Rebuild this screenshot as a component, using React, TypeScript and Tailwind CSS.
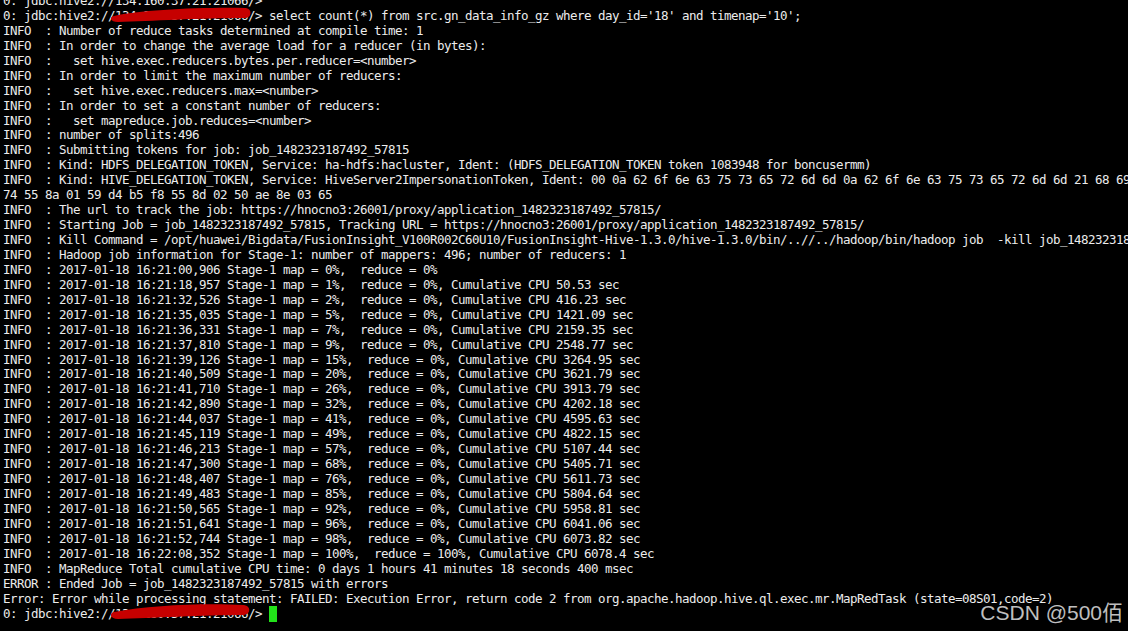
import React from "react";

const prompt = "0: jdbc:hive2://134.160.37.21:21066/>";

const stages: [string, string, string, string][] = [
  ["16:21:00,906", "0%", "0%", ""],
  ["16:21:18,957", "1%", "0%", "50.53"],
  ["16:21:32,526", "2%", "0%", "416.23"],
  ["16:21:35,035", "5%", "0%", "1421.09"],
  ["16:21:36,331", "7%", "0%", "2159.35"],
  ["16:21:37,810", "9%", "0%", "2548.77"],
  ["16:21:39,126", "15%", "0%", "3264.95"],
  ["16:21:40,509", "20%", "0%", "3621.79"],
  ["16:21:41,710", "26%", "0%", "3913.79"],
  ["16:21:42,890", "32%", "0%", "4202.18"],
  ["16:21:44,037", "41%", "0%", "4595.63"],
  ["16:21:45,119", "49%", "0%", "4822.15"],
  ["16:21:46,213", "57%", "0%", "5107.44"],
  ["16:21:47,300", "68%", "0%", "5405.71"],
  ["16:21:48,407", "76%", "0%", "5611.73"],
  ["16:21:49,483", "85%", "0%", "5804.64"],
  ["16:21:50,565", "92%", "0%", "5958.81"],
  ["16:21:51,641", "96%", "0%", "6041.06"],
  ["16:21:52,744", "98%", "0%", "6073.82"],
  ["16:22:08,352", "100%", "100%", "6078.4"],
];

const lines: string[] = [
  prompt,
  prompt + " select count(*) from src.gn_data_info_gz where day_id='18' and timenap='10';",
  "INFO  : Number of reduce tasks determined at compile time: 1",
  "INFO  : In order to change the average load for a reducer (in bytes):",
  "INFO  :   set hive.exec.reducers.bytes.per.reducer=<number>",
  "INFO  : In order to limit the maximum number of reducers:",
  "INFO  :   set hive.exec.reducers.max=<number>",
  "INFO  : In order to set a constant number of reducers:",
  "INFO  :   set mapreduce.job.reduces=<number>",
  "INFO  : number of splits:496",
  "INFO  : Submitting tokens for job: job_1482323187492_57815",
  "INFO  : Kind: HDFS_DELEGATION_TOKEN, Service: ha-hdfs:hacluster, Ident: (HDFS_DELEGATION_TOKEN token 1083948 for boncusermm)",
  "INFO  : Kind: HIVE_DELEGATION_TOKEN, Service: HiveServer2ImpersonationToken, Ident: 00 0a 62 6f 6e 63 75 73 65 72 6d 6d 0a 62 6f 6e 63 75 73 65 72 6d 6d 21 68 69",
  "74 55 8a 01 59 d4 b5 f8 55 8d 02 50 ae 8e 03 65",
  "INFO  : The url to track the job: https://hnocno3:26001/proxy/application_1482323187492_57815/",
  "INFO  : Starting Job = job_1482323187492_57815, Tracking URL = https://hnocno3:26001/proxy/application_1482323187492_57815/",
  "INFO  : Kill Command = /opt/huawei/Bigdata/FusionInsight_V100R002C60U10/FusionInsight-Hive-1.3.0/hive-1.3.0/bin/..//../hadoop/bin/hadoop job  -kill job_1482323187492_57815",
  "INFO  : Hadoop job information for Stage-1: number of mappers: 496; number of reducers: 1",
  ...stages.map(
    ([t, m, r, cpu]) =>
      `INFO  : 2017-01-18 ${t} Stage-1 map = ${m},  reduce = ${r}` + (cpu ? `, Cumulative CPU ${cpu} sec` : "")
  ),
  "INFO  : MapReduce Total cumulative CPU time: 0 days 1 hours 41 minutes 18 seconds 400 msec",
  "ERROR : Ended Job = job_1482323187492_57815 with errors",
  "Error: Error while processing statement: FAILED: Execution Error, return code 2 from org.apache.hadoop.hive.ql.exec.mr.MapRedTask (state=08S01,code=2)",
];

export default function App() {
  return (
    <div className="relative w-[1128px] h-[631px] overflow-hidden bg-black text-[#ececec]">
      <div className="-mt-[6px] pl-[3px] font-['DejaVu_Sans_Mono',monospace] text-[12.5px] tracking-[-0.525px] leading-[14.95px]">
        {lines.map((l, i) => (
          <div key={i} className="h-[14.95px] overflow-hidden whitespace-pre">
            {l}
          </div>
        ))}
        <div className="h-[14.95px] whitespace-pre">
          {prompt + " "}
          <span className="inline-block h-[16px] w-[8px] bg-[#22e21a] align-[-4px]" />
        </div>
      </div>

      {/* redaction marks */}
      <svg className="pointer-events-none absolute left-0 top-0" width="1128" height="631" viewBox="0 0 1128 631">
        <path
          d="M114 16 C140 10, 200 7, 246 8 C252 9, 252 17, 246 18 C200 18, 150 21, 118 22 C110 22, 109 17, 114 16 Z"
          fill="#c60000"
        />
        <path
          d="M114 612 C150 605, 205 603, 244 605 C251 606, 251 614, 244 615 C205 615, 150 618, 118 619 C110 619, 109 613, 114 612 Z"
          fill="#c60000"
        />
      </svg>

      {/* watermark */}
      <div className="absolute right-[5px] bottom-[8px] font-['Liberation_Sans','Noto_Sans_CJK_SC',sans-serif] text-[21px] leading-none text-white/75">
        CSDN @500佰
      </div>
    </div>
  );
}
